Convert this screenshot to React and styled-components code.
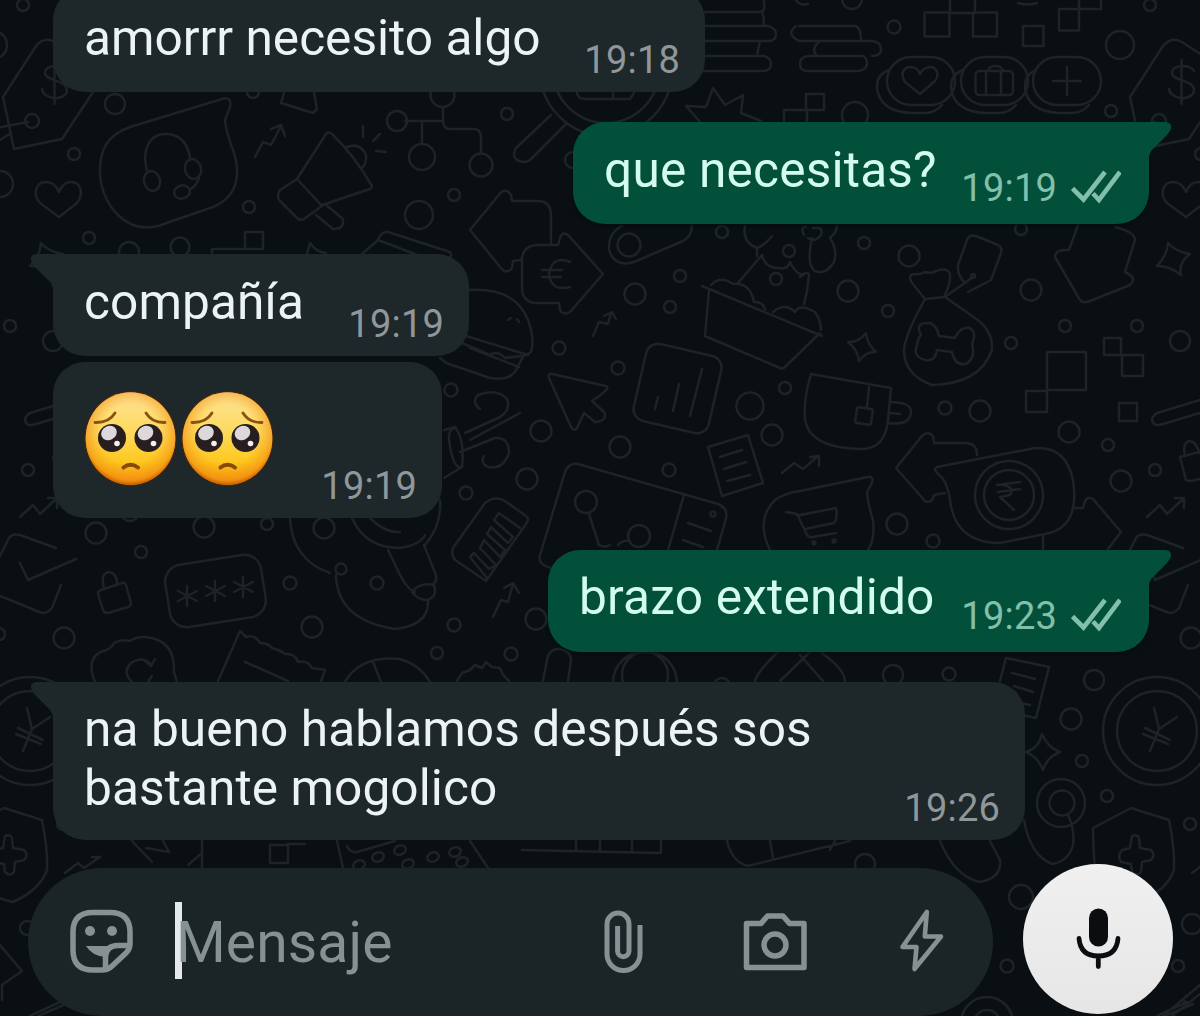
import React from "react";
import styled, { createGlobalStyle, css } from "styled-components";

const GlobalStyle = createGlobalStyle`
  * { box-sizing: border-box; }
  html, body { margin: 0; padding: 0; background: #0a0f13; overflow: hidden; }
`;

const Screen = styled.main`
  display: grid;
  grid-template: 1016px / 1200px;
  width: 1200px;
  height: 1016px;
  overflow: hidden;
  background: #0a0f13;
  font-family: Roboto, "Liberation Sans", sans-serif;
  > * { grid-area: 1 / 1; }
`;

const WallpaperSvg = styled.svg`
  display: block;
  width: 1200px;
  height: 1016px;
  fill: none;
  stroke: #1d2326;
  stroke-width: 2.5;
  stroke-linejoin: round;
  stroke-linecap: round;
`;

const Chat = styled.div`
  display: flex;
  flex-direction: column;
  justify-content: flex-end;
  min-width: 0;
`;

const Thread = styled.section`
  display: flex;
  flex-direction: column;
  padding: 0 51px 28px 53px;
`;

const Bubble = styled.article`
  position: relative;
  display: flex;
  align-items: flex-end;
  justify-content: space-between;
  width: ${(p) => p.$width}px;
  height: ${(p) => p.$height}px;
  margin-top: ${(p) => p.$gap}px;
  padding: 0 25px 10px 31px;
  border-radius: 32px;
  background: #1e272a;
  color: #edf3f5;
  ${(p) =>
    p.$sent &&
    css`
      align-self: flex-end;
      padding-right: 28px;
      background: #02503a;
      color: #d3fcee;
      box-shadow: 0 2px 3px rgba(0, 12, 6, 0.6);
    `}
  ${(p) => p.$tail && (p.$sent ? "border-top-right-radius: 0;" : "border-top-left-radius: 0;")}
`;

const Tail = styled.svg`
  position: absolute;
  top: 0;
  ${(p) => (p.$sent ? "right: -23px;" : "left: -23px;")}
  width: 24px;
  height: 36px;
  fill: ${(p) => (p.$sent ? "#02503a" : "#1e272a")};
`;

const Text = styled.p`
  margin: 0 0 ${(p) => p.$lift}px;
  font-size: 49.6px;
  line-height: 59px;
  letter-spacing: ${(p) => p.$tracking}px;
  white-space: pre-line;
`;

const Emojis = styled.div`
  display: flex;
  gap: 5px;
  margin: 0 0 21px;
`;

const EmojiSvg = styled.svg`
  width: 92px;
  height: 96px;
`;

const Meta = styled.div`
  display: flex;
  align-items: center;
  gap: 14px;
  margin-bottom: ${(p) => (p.$sent ? 4 : 0)}px;
  color: ${(p) => (p.$sent ? "#82c0ab" : "#8f979a")};
`;

const Time = styled.time`
  font-size: 38px;
  line-height: 44px;
  letter-spacing: 0.2px;
`;

const TicksSvg = styled.svg`
  width: 50px;
  height: 34px;
  margin-bottom: 3px;
  fill: none;
  stroke: currentColor;
  stroke-width: 4.6;
`;

const Composer = styled.footer`
  display: flex;
  align-items: center;
  gap: 30px;
  height: 148px;
  padding-left: 28px;
`;

const InputPill = styled.div`
  display: flex;
  align-items: center;
  width: 965px;
  height: 148px;
  padding: 0 48px 3px 40px;
  border-radius: 74px;
  background: #1b2427;
  color: #869194;
`;

const Caret = styled.span`
  width: 7px;
  height: 77px;
  margin: 0 -6px 0 41px;
  background: #e3e9eb;
`;

const Placeholder = styled.span`
  flex: 1;
  padding-top: 5px;
  font-size: 57px;
  line-height: 66px;
  letter-spacing: 0.1px;
`;

const Icon = styled.svg`
  flex: none;
  width: ${(p) => p.$w}px;
  height: 66px;
  margin-right: ${(p) => p.$after || 0}px;
  fill: none;
  stroke: currentColor;
  stroke-width: 5.5;
  stroke-linecap: round;
  stroke-linejoin: round;
`;

const MicButton = styled.button`
  display: flex;
  align-items: center;
  justify-content: center;
  width: 150px;
  height: 150px;
  margin-top: -6px;
  padding: 0;
  border: 0;
  border-radius: 50%;
  background: linear-gradient(#f0f0f0, #e6e6e6);
  color: #0b0e10;
`;

/* Small scattered rings: x, y, radius */
const RINGS = [
  [23, 5, 6], [-7, 45, 14], [115, 104, 10], [74, 154, 6], [0, 184, 13], [89, 238, 6],
  [129, 252, 10], [180, 247, 9.5], [249, 207, 6], [253, 92, 6], [507, 114, 6],
  [454, 195, 6], [573, 160, 8], [419, 215, 14], [855, 115, 13], [852, -1, 10],
  [894, 27, 6.5], [1111, 111, 6], [722, 232, 6], [864, 243, 6], [909, 256, 10.5],
  [1021, 229, 6], [680, 276, 6], [635, 294, 10.5], [670, 307, 6], [559, 348, 6.5],
  [618, 368, 6.5], [451, 390, 6.5], [750, 406, 13.5], [785, 388, 6], [541, 431, 10.5],
  [620, 447, 10.5], [772, 435, 10.5], [527, 479, 10.5], [669, 470, 6.5], [466, 493, 6.5],
  [848, 291, 10.5], [888, 311, 6], [1031, 290, 10.5], [1065, 326, 6], [10, 326, 6],
  [53, 341, 10], [1011, 343, 6], [945, 408, 6.5], [980, 411, 10.5], [1069, 432, 10.5],
  [1108, 445, 6], [1121, 481, 10.5], [28, 470, 6], [897, 524, 10.5], [933, 541, 6.5],
  [96, 533, 10.5], [141, 552, 6], [204, 527, 10.5], [267, 524, 6], [324, 528, 10.5],
  [130, 512, 9], [290, 583, 6.5], [312, 627, 10.5], [64, 638, 10.5], [-1, 634, 6],
  [377, 583, 6.5], [454, 625, 6.5], [437, 653, 6], [511, 654, 6.5], [536, 619, 10.5],
  [722, 686, 8], [893, 675, 10], [949, 674, 6.5], [1094, 680, 10], [1071, 719, 10.5],
  [1082, 761, 6], [1107, 796, 6], [63, 824, 6], [865, 864, 10], [1021, 897, 12],
  [1007, 966, 6.5], [1192, 924, 10], [1178, 966, 6], [27, 928, 7],
];

const SQUARES = [
  [924.5, 12.5, 25, 24], [973, 12.5, 24, 24], [1023, 26, 20.5, 20], [1059, 9, 20, 21.5],
  [245, 232, 18, 17], [806, 94, 18, 16], [1047, 352, 39, 38], [1026, 391, 21, 21],
  [1104, 338, 17, 17], [1122, 355, 21, 21], [1119, 403, 18, 18], [270, 845, 18, 18],
];

const DOODLES = [
  /* price tag with dollar sign */
  "M3 97L36 46Q44 36 55 42L92 66Q98 72 93 92L62 139L14 149L3 97M-10 129L28 122M0 140L11 133M67 71C64 64 45 64 45 73C45 81 67 80 67 90C67 101 44 101 42 89M54.5 60V104",
  /* heart */
  "M59 217L40 203C32 194 36 182 46 182C53 182 57 187 59 192C61 187 64 182 71 182C81 182 84 194 77 203Z",
  /* speech bubble with headset */
  "M130 127L222 99Q232 96 230 107L225 120Q226 132 233 150C242 175 237 197 213 207L158 226C125 234 103 205 100 175C99 150 107 135 130 127ZM147 170C141 150 150 134 165 134C182 134 188 145 190 158M199 178Q196 187 190 189",
  /* trend arrows */
  "M255 157L263 142L271 145L281 126M271 129L281 125L285 136",
  "M593 336L599 322L608 324L611 313M604 316L612 312L616 319",
  "M493 617L501 600L508 602L513 584M504 588L513 583L519 593",
  "M782 473L794 463L803 469L818 456M810 457L819 456V466",
  "M20 517L33 505L40 514L56 499M48 498L57 498L57 508",
  "M65 873L78 863L84 868L100 857M92 857L100 857",
  "M284 93L281 103L313 113L317 109L314 93",
  /* megaphone */
  "M297 179L326 134Q328 131 332 134Q354 155 372 186Q372 189 367 190L322 205M297 179L280 190Q276 196 280 201L297 218Q300 221 304 219L322 206ZM316 215L333 229Q344 230 343 219L325 204M347 147Q360 142 366 155Q367 163 362 168M363 126V137M373 141L380 134M376 151L386 152",
  "M212 253V249H245M307 254L310 243Q316 252 326 253M362 254L378 240Q381 231 388 232L450 252Q452 256 450 257M378 240L420 256",
  /* flow chart */
  "M443 108V121Q443 129 450 129H474Q481 129 481 138V153M405 121H443M422 121V144",
  /* magnifier */
  "M551 115L516 148Q511 158 519 161Q527 164 532 158L566 124M577 93Q578 99 585 99H630M613 93V99M630 99L634 93",
  "M700 122L686 106L706 107L713 88L725 105L743 95L741 113L761 121M784 122V110H806M807 110V122",
  /* coin stacks */
  "M705 12H758Q766 12 764 5V0M762 12Q765 20 763 26M700 26H768Q776 28 776 34Q776 41 768 41H700M760 41Q758 50 757 56M700 56H764Q771 58 771 64Q771 71 762 71H700",
  "M799 26H855Q861 27 861 41M796 26Q785 34 799 41H872Q881 42 881 49Q881 56 872 56M820 41Q810 49 817 56H808Q800 57 800 64Q800 71 808 71H858Q867 70 867 63Q867 58 863 56H817",
  "M950 12V0M975 12V0M949 13H975M1079 9H1101V0M1079 9V0M1018 3Q1027 6 1037 3M796 0Q800 6 808 4",
  /* pill buttons */
  "M889 70Q876 75 877 88Q880 112 912 113H925Q935 113 942 105M963 70Q950 75 951 88Q954 112 986 113H999Q1009 113 1016 105M1036 70Q1024 75 1025 88Q1028 112 1060 113H1072Q1082 113 1089 105",
  "M920 94L905 82C899 72 905 67 911 67C916 67 919 71 920 74C921 71 925 67 930 67C937 67 940 75 935 81ZM986 95V71M1001 71V95M988 71Q989 66 995 66Q1002 66 1003 71M1067 67V95M1053 81H1081",
  /* arrows with euro */
  "M551 243V216Q551 201 538 201H512L511 195Q505 186 498 196L470 230L501 268Q507 275 512 268L513 261L521 260",
  "M522 288V258Q524 245 538 245H558L560 238Q563 230 569 236L603 274L570 312Q563 316 560 310L559 303H535Q522 301 522 288ZM570 262Q552 255 549 274Q551 292 570 287M542 270H562M542 277H561",
  "M692 225Q692 236 683 241L634 262Q615 268 609 250Q608 233 622 226",
  /* flowers and planter */
  "M745 226Q742 242 757 248Q765 245 772 236M757 248V256M762 255L737 284M762 255Q765 268 778 268Q788 270 790 262Q797 276 803 274M812 238Q806 265 815 271Q825 276 834 262Q838 250 830 238Q837 232 837 226M800 277Q808 270 809 275Q808 290 804 304M804 235Q800 226 806 227M813 228Q824 226 821 235Q815 243 808 238",
  "M702 286L822 336M709 290L705 336L780 368Q783 370 786 366L820 333M711 285Q720 275 733 284Q750 282 754 302Q762 301 765 309M773 312Q785 302 795 312Q800 303 815 312Q821 320 821 330",
  /* burger */
  "M469 290Q515 287 528 320Q535 340 531 352L522 357M463 335L528 355M462 343L490 355Q497 350 505 358L521 356M440 358Q446 364 455 366L490 378Q512 382 518 366L523 357M470 348L519 367M508 320L511 318M517 319L519 322",
  /* pointer */
  "M552 374L606 386Q612 388 592 401L604 412Q608 421 595 422L584 413L577 428Q574 432 571 427L549 378Q548 373 552 374Z",
  "M655 409L658 397M673 411L679 384M690 416L702 369",
  "M708 447L748 435L763 483L722 496ZM720 457L742 450M724 469L746 462M727 481L750 475",
  /* wind */
  "M480 409Q471 402 478 395Q497 388 507 399Q511 410 500 417L465 433M520 413L470 440M460 452L495 438Q509 437 509 453Q503 470 488 467Q480 463 484 456M444 430L455 427Q465 440 462 467Q453 470 449 440Q448 430 455 427M444 478L462 467",
  /* barcode card */
  "M453 548L485 503Q495 495 505 501L526 516Q530 519 526 524L486 581L458 562Q450 557 453 548ZM487 578L470 557L474 553L489 569L496 565L480 548L484 540L500 557L505 550L487 534L491 527L508 543L513 537L494 520L499 513L520 528",
  /* map */
  "M540 555L565 472Q569 462 578 464L718 504Q730 509 725 522L717 550M684 495L668 550M540 555Q537 565 552 568M589 514L599 545Q605 548 610 545M618 545Q622 540 630 541M688 523L711 531M683 540L703 547",
  /* cart bubble */
  "M770 550Q755 520 775 500Q785 493 800 491L868 477Q874 476 872 483L867 492Q868 505 873 520Q875 540 868 550M800 515L836 508Q838 518 834 523L805 529M786 512L797 514L806 533Q808 538 813 537L836 533",
  /* sparkles */
  "M848 342Q858 343 866 333Q867 344 876 352Q866 351 859 361Q858 350 848 342ZM41 243Q49 252 63 254Q51 263 54 275Q43 266 30 266Q40 256 41 243ZM1042 734Q1048 748 1060 752Q1047 757 1043 770Q1038 757 1026 752Q1039 748 1042 734Z",
  /* treat bag */
  "M925 299L912 283Q907 274 915 274Q920 275 925 272Q932 274 936 271Q947 267 950 274Q951 283 944 297Q935 298 925 299Q905 335 904 350Q904 375 932 385Q980 384 992 350Q993 330 975 318L945 297L973 277M921 335Q914 322 930 323Q937 326 939 336L955 338Q960 326 970 328Q977 333 972 344Q976 358 966 364Q955 366 952 352L937 350Q935 362 925 360Q912 356 917 345Q918 338 921 335Z",
  "M958 265L967 240Q969 234 976 236L998 245Q1003 248 1001 253L991 280L968 292M958 265Q957 275 965 283",
  "M1078 225L1069 250Q1055 249 1055 257L1080 300Q1083 304 1090 301L1130 285Q1138 278 1125 272L1135 240Q1135 232 1115 227",
  "M73 400L30 413Q22 418 27 424Q30 426 36 424L73 413",
  /* mug */
  "M811 374L891 388L888 420Q885 450 860 449Q810 448 805 420Q803 400 811 374ZM869 387L867 407M890 402Q912 402 911 413Q909 426 888 423M890 413L900 414",
  /* rupee bubble */
  "M977 455Q977 443 965 443H934L933 436Q928 430 922 436L896 468L925 501Q932 504 934 495L945 493M937 467L1035 448Q1066 446 1073 480Q1080 524 1050 533L1000 543Q955 543 950 500Q947 480 938 474Q933 469 937 467ZM997 485L1020 482M998 492L1020 489M1003 485Q1015 487 1010 495L1000 497L1014 510",
  "M1075 508H1083Q1086 494 1093 499L1121 532L1108 549M1043 535V550",
  "M53 457L76 451M53 457L59 480Q62 482 73 479M58 456Q55 442 63 441Q70 442 72 453",
  "M0 556L9 538Q12 533 20 535L56 548M20 563L28 580L76 559M0 596L42 613Q48 613 52 608L61 585",
  /* padlock */
  "M101 590L122 583Q125 582 126 585L131 603Q131 606 128 607L108 613Q104 613 103 610L98 594Q98 591 101 590ZM104 588Q100 573 109 572Q117 573 117 584",
  "M187 586V606M178 591L197 601M178 601L197 591M215 581V601M206 586L225 596M206 596L225 586M243 577V597M234 582L253 592M234 592L253 582",
  "M95 682Q85 658 103 651Q110 650 114 643Q122 639 130 641Q140 634 155 639Q175 645 174 672L177 682M132 682Q122 672 131 663Q143 655 152 665M155 659L151 666L145 661M152 676L148 682",
  "M218 681L240 631L246 637Q255 634 260 643Q268 643 272 648Q280 650 285 654Q295 653 298 662Q308 660 312 668L325 670L321 681M245 662L288 681",
  "M290 518Q292 560 330 573M336 575Q337 620 395 629Q430 625 428 600M352 518Q365 548 400 548Q420 545 425 535M370 518Q385 533 400 532M388 550L400 575Q408 590 415 592M424 545L436 575Q437 583 432 585M412 592Q420 582 434 585Q438 597 427 600Q418 600 412 592M440 500Q442 525 425 545",
  "M345 682Q360 655 400 659Q420 665 430 682M373 662L381 682M457 681L462 673L470 670L475 665L482 668L486 662L492 667L500 668L503 675L509 681",
  "M543 681L547 660Q549 649 559 649Q571 651 571 660L568 681M755 681Q757 672 778 652M780 681L810 652M800 655L823 681M822 653Q845 670 845 681",
  "M1000 681L1006 658L1049 667L1036 718L1022 715M1012 673L1035 679M1014 686L1033 692M1020 703L1030 705",
  /* yen */
  "M27 708L32 729L50 717M32 729L23 751M18 728L43 740M16 734L41 744",
  "M1068 815Q1075 830 1073 845Q1068 862 1052 864Q1030 855 1024 820M940 841Q955 877 980 882Q1002 878 1000 860L990 841",
  /* shield */
  "M-34 828L4 808L42 820Q48 850 47 870Q40 890 13 902Q-20 895 -32 870Q-34 850 -34 828ZM5 836Q10 834 12 838L13 848L24 850Q29 855 24 860L15 862L14 872Q10 877 5 872L4 864L-6 862Q-10 856 -5 850L3 848Z",
  "M522 850L661 853V841M576 841V851M600 841V852M632 841V852M727 841Q732 862 748 866L850 841M770 841L773 858M835 841L830 850",
  "M132 841L152 862M146 848L169 852L163 841M202 841V868M188 865L202 853M288 844H305M337 841L343 868M347 846Q350 853 357 852L395 841M470 841L488 868",
  "M0 945L22 971L2 985V1000M30 1016L60 1002M38 1016L66 1004M1163 1016L1200 985M1172 1016L1200 994M1183 1000L1188 1004",
];

const Wallpaper = () => (
  <WallpaperSvg viewBox="0 0 1200 1016" aria-hidden="true">
    <defs>
      <g id="doodles">
        {RINGS.map(([x, y, r], i) => <circle key={i} cx={x} cy={y} r={r} />)}
        {SQUARES.map(([x, y, w, h], i) => <rect key={i} x={x} y={y} width={w} height={h} />)}
        {DOODLES.map((d, i) => <path key={i} d={d} />)}
        <circle cx="32" cy="121" r="7" />
        <ellipse cx="152" cy="181" rx="8" ry="10" transform="rotate(-15 152 181)" />
        <ellipse cx="193" cy="169" rx="8" ry="10" transform="rotate(-15 193 169)" />
        <ellipse cx="182" cy="192" rx="8" ry="6.5" transform="rotate(-15 182 192)" />
        <circle cx="442.5" cy="95" r="12" />
        <circle cx="481" cy="165" r="11.5" />
        <circle cx="422" cy="157" r="13" />
        <circle cx="397" cy="121" r="10" />
        <circle cx="606" cy="70" r="66" />
        <circle cx="606" cy="70" r="53" />
        <rect x="887" y="57" width="68" height="48" rx="24" />
        <rect x="961" y="57" width="67" height="48" rx="24" />
        <rect x="1033" y="57" width="68" height="48" rx="24" />
        <rect x="975.5" y="71" width="37.5" height="24" rx="4" />
        <circle cx="629" cy="245" r="11.5" />
        <circle cx="789" cy="251" r="6" />
        <circle cx="776" cy="279" r="6" />
        <rect x="639" y="349" width="77" height="79" rx="12" transform="rotate(13 677.5 388.5)" />
        <circle cx="586" cy="502" r="11" />
        <circle cx="639" cy="536" r="11" />
        <circle cx="713" cy="514" r="2.5" />
        <circle cx="814" cy="543" r="1.5" />
        <circle cx="834" cy="541" r="1.5" />
        <circle cx="973" cy="276" r="2" />
        <rect x="856" y="408" width="16" height="16" rx="2" transform="rotate(8 864 416)" />
        <circle cx="1009" cy="495" r="34" />
        <circle cx="1009" cy="495" r="25" />
        <rect x="167" y="559.5" width="97" height="63" rx="17" transform="rotate(-9 215.5 591)" />
        <circle cx="341" cy="569" r="5.5" />
        <circle cx="645" cy="683" r="32" />
        <circle cx="645" cy="675" r="23" />
        <circle cx="30" cy="731" r="54" />
        <circle cx="30" cy="731" r="40" />
        <circle cx="1061" cy="803" r="24" />
        <circle cx="1062" cy="803" r="12.5" />
        {[[378, 857], [400, 850], [359, 865], [408, 864], [433, 857], [455, 852], [462, 862]].map(([x, y]) => (
          <ellipse key={x} cx={x} cy={y} rx="6" ry="4.5" transform={`rotate(-20 ${x} ${y})`} />
        ))}
        <circle cx="987" cy="1023" r="26" />
        <circle cx="987" cy="1023" r="13" />
      </g>
    </defs>
    <use href="#doodles" />
    <use href="#doodles" x="1127" />
  </WallpaperSvg>
);

const BubbleTail = ({ sent }) => (
  <Tail $sent={sent} viewBox="0 0 24 36">
    <path
      d={
        sent
          ? "M0 0H18Q24 1 23 6Q22 10 17 15L7 25Q1 30 1 36H0Z"
          : "M24 0H6Q0 1 1 6Q2 10 7 15L17 25Q23 30 23 36H24Z"
      }
    />
  </Tail>
);

const Ticks = () => (
  <TicksSvg viewBox="0 0 50 34">
    <path d="M1.5 18.5L12.5 29.5L34 2" />
    <path d="M22 23.5L28 30L49 2" />
  </TicksSvg>
);

const PleadingFace = () => (
  <EmojiSvg viewBox="0 0 92 96">
    <defs>
      <linearGradient id="skin" x1="0" y1="0" x2="0" y2="1">
        <stop offset="0" stopColor="#fbd98a" />
        <stop offset="0.2" stopColor="#fddf7c" />
        <stop offset="0.45" stopColor="#fdd95a" />
        <stop offset="0.75" stopColor="#fdc81f" />
        <stop offset="1" stopColor="#f8960f" />
      </linearGradient>
      <radialGradient id="rim" cx="0.5" cy="0.45" r="0.54">
        <stop offset="0.6" stopColor="#f59a10" stopOpacity="0" />
        <stop offset="0.92" stopColor="#f08a10" stopOpacity="0.6" />
        <stop offset="1" stopColor="#c96306" stopOpacity="0.9" />
      </radialGradient>
    </defs>
    <ellipse cx="46.5" cy="47.5" rx="46" ry="47.5" fill="#4a2508" />
    <ellipse cx="46.5" cy="47.5" rx="44.8" ry="46.3" fill="url(#skin)" />
    <ellipse cx="46.5" cy="47.5" rx="44.8" ry="46.3" fill="url(#rim)" />
    <g fill="none" stroke="#8a5210" strokeWidth="2.8" strokeLinecap="round">
      <path d="M11 31.5Q25 32 31 22" />
      <path d="M62 22Q68 32 81 31.5" />
    </g>
    <g>
      <circle cx="28" cy="47" r="14" fill="#281e20" />
      <circle cx="64.5" cy="47" r="14" fill="#281e20" />
      <ellipse cx="25" cy="42" rx="8" ry="7" fill="#dcd8dc" transform="rotate(-25 25 42)" />
      <ellipse cx="61.5" cy="42" rx="8" ry="7" fill="#dcd8dc" transform="rotate(-25 61.5 42)" />
      <circle cx="33" cy="52.5" r="2.8" fill="#f5eff2" />
      <circle cx="69.5" cy="52.5" r="2.8" fill="#f5eff2" />
    </g>
    <path d="M39.5 76.5Q46.5 71 54 76.5" fill="none" stroke="#864a0a" strokeWidth="4" strokeLinecap="round" />
  </EmojiSvg>
);

const Message = ({ text, emojis, time, sent, tail, gap = 30, width, height, tracking = 0, lift = 14 }) => (
  <Bubble $sent={sent} $tail={tail} $gap={gap} $width={width} $height={height}>
    {tail && <BubbleTail sent={sent} />}
    {emojis ? (
      <Emojis>
        <PleadingFace />
        <PleadingFace />
      </Emojis>
    ) : (
      <Text $tracking={tracking} $lift={lift}>{text}</Text>
    )}
    <Meta $sent={sent}>
      <Time>{time}</Time>
      {sent && <Ticks />}
    </Meta>
  </Bubble>
);

const MESSAGES = [
  { text: "amorrr necesito algo", time: "19:18", width: 652, height: 104 },
  { text: "que necesitas?", time: "19:19", sent: true, tail: true, width: 576, height: 102, tracking: 0.2 },
  { text: "compañía", time: "19:19", tail: true, width: 416, height: 102, tracking: 0.1 },
  { emojis: true, time: "19:19", gap: 6, width: 389, height: 156 },
  { text: "brazo extendido", time: "19:23", sent: true, tail: true, gap: 32, width: 601, height: 102, tracking: 0.2, lift: 15 },
  { text: "na bueno hablamos después sos\nbastante mogolico", time: "19:26", tail: true, width: 972, height: 158, tracking: 0.07, lift: 12 },
];

const StickerIcon = () => (
  <Icon $w={66} viewBox="68 908 66 66">
    <path d="M93 912.5H110Q130 912.5 130 932V944Q130 949 126 953L111 967Q107 970 102 970H93Q73 970 73 950V932Q73 912.5 93 912.5Z" />
    <path d="M105.5 968V957Q106 945.5 118 945.5H129" strokeLinecap="butt" />
    <circle cx="90" cy="931" r="5" fill="currentColor" stroke="none" />
    <circle cx="112" cy="931" r="5" fill="currentColor" stroke="none" />
    <path d="M86 946H110L105.5 957Q92 956 86 946Z" fill="currentColor" stroke="none" />
  </Icon>
);

const ClipIcon = () => (
  <Icon $w={42} $after={98} viewBox="602 908 42 66">
    <path d="M640 925V954a16.5 16.5 0 0 1-33 0V924a11 11 0 0 1 22 0V951a5.7 5.7 0 0 1-11.4 0V926" strokeWidth="5" strokeLinecap="butt" />
  </Icon>
);

const CameraIcon = () => (
  <Icon $w={66} $after={91} viewBox="742 908 66 66">
    <path d="M746.5 923.5H761L767.5 916H783L789.5 923.5H804V967.5H746.5Z" />
    <circle cx="775" cy="945" r="11" />
  </Icon>
);

const BoltIcon = () => (
  <Icon $w={46} viewBox="899 908 46 66">
    <path d="M926.8 912L924.8 936.5H941L914.5 969L916.5 947H902.5Z" strokeWidth="4.6" />
  </Icon>
);

const MicIcon = () => (
  <Icon $w={66} viewBox="1065.5 906 66 66">
    <rect x="1089.5" y="908.5" width="19" height="38" rx="9.5" fill="currentColor" stroke="none" />
    <path d="M1079.5 938.5Q1081 956 1098.8 956Q1117 956 1118.5 938.5M1098.8 956V966.5" strokeWidth="4.8" />
  </Icon>
);

export default function App() {
  return (
    <Screen>
      <GlobalStyle />
      <Wallpaper />
      <Chat>
        <Thread>
          {MESSAGES.map((m, i) => <Message key={i} {...m} />)}
        </Thread>
        <Composer>
          <InputPill>
            <StickerIcon />
            <Caret />
            <Placeholder>Mensaje</Placeholder>
            <ClipIcon />
            <CameraIcon />
            <BoltIcon />
          </InputPill>
          <MicButton type="button">
            <MicIcon />
          </MicButton>
        </Composer>
      </Chat>
    </Screen>
  );
}
